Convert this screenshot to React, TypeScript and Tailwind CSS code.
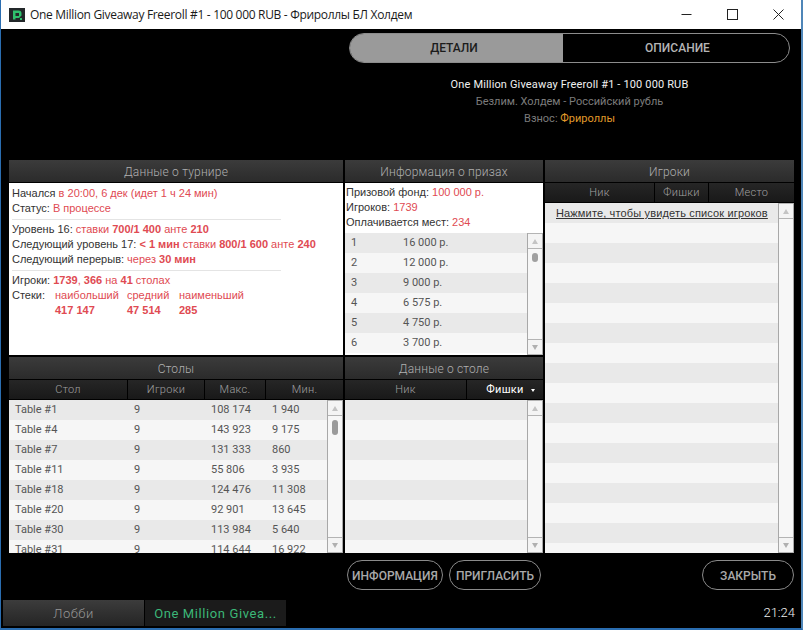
import { FC, ReactNode } from 'react';

const font = "font-['Roboto',sans-serif]";

const PanelTitle: FC<{ children: ReactNode }> = ({ children }) => (
  <div className="h-[22px] shrink-0 flex items-center justify-center pt-px bg-gradient-to-b from-[#3b3b3b] to-[#2b2b2b] text-[12px] font-light tracking-[0.2px] text-[#b0b0b0]">
    {children}
  </div>
);

const ColumnHeader: FC<{ columns: { label: string; width: string; active?: boolean }[] }> = ({ columns }) => (
  <div className="h-[21px] shrink-0 flex bg-black pt-px pb-px gap-px">
    {columns.map((col) => (
      <div
        key={col.label}
        className={`${col.width} relative flex items-center justify-center pt-[2px] bg-gradient-to-b from-[#262626] to-[#191919] text-[11px] tracking-[0.3px] ${col.active ? 'text-white font-normal' : 'text-[#a0a0a0] font-light'}`}
      >
        {col.label}
        {col.active && <span className="absolute right-[8px] top-[9px] border-x-[2px] border-t-[3px] border-x-transparent border-t-white" />}
      </div>
    ))}
  </div>
);

const Scrollbar: FC<{ thumb?: 'round' | 'tall' | 'none' }> = ({ thumb = 'none' }) => (
  <div className="w-[16px] shrink-0 flex flex-col bg-[#f7f7f7] border-x border-[#a8a8a8]">
    <div className="h-[16px] shrink-0 flex items-center justify-center border-b border-t border-[#b4b4b4] bg-[#f4f4f4]">
      <span className="border-x-[3px] border-b-[5px] border-x-transparent border-b-[#c4c4c4]" />
    </div>
    <div className="flex-1 pt-[4px] flex justify-center">
      {thumb === 'round' && <span className="w-[6px] h-[9px] rounded-full bg-[#a0a0a0]" />}
      {thumb === 'tall' && <span className="w-[6px] h-[15px] rounded-full bg-[#9a9a9a]" />}
    </div>
    <div className="h-[16px] shrink-0 flex items-center justify-center border-t border-b border-[#b4b4b4] bg-[#f4f4f4]">
      <span className="border-x-[3px] border-t-[5px] border-x-transparent border-t-[#b0b0b0]" />
    </div>
  </div>
);

const Stripes: FC<{ count: number }> = ({ count }) => (
  <div className="flex-1 overflow-hidden">
    {Array.from({ length: count }).map((_, i) => (
      <div key={i} className={`h-[20px] ${i % 2 === 0 ? 'bg-[#e9e9e9]' : 'bg-[#f6f6f6]'}`} />
    ))}
  </div>
);

const tables = [
  ['Table #1', '9', '108 174', '1 940'],
  ['Table #4', '9', '143 923', '9 175'],
  ['Table #7', '9', '131 333', '860'],
  ['Table #11', '9', '55 806', '3 935'],
  ['Table #18', '9', '124 476', '11 308'],
  ['Table #20', '9', '92 901', '13 645'],
  ['Table #30', '9', '113 984', '5 640'],
  ['Table #31', '9', '114 644', '16 922'],
];

const prizes = [
  ['1', '16 000 р.'],
  ['2', '12 000 р.'],
  ['3', '9 000 р.'],
  ['4', '6 575 р.'],
  ['5', '4 750 р.'],
  ['6', '3 700 р.'],
];

const Red: FC<{ children: ReactNode; bold?: boolean }> = ({ children, bold }) => (
  <span className={`text-[#e04a52] ${bold ? 'font-bold' : ''}`}>{children}</span>
);

const OutlineButton: FC<{ width: string; children: ReactNode }> = ({ width, children }) => (
  <div className={`${width} h-[30px] pt-px rounded-full border border-[#8a8a8a] flex items-center justify-center text-[12px] font-medium text-[#a9a9a9]`}>
    {children}
  </div>
);

export default function App() {
  return (
    <div className={`${font} w-[803px] h-[630px] flex flex-col overflow-hidden bg-black border-l border-l-[#2a6db0] border-r-2 border-r-[#4f86b8] border-b-2 border-b-[#2a6db0]`}>
      <div className="h-[29px] shrink-0 flex items-center bg-white pl-[8px]">
        <svg width="16" height="14" viewBox="0 0 16 14" className="shrink-0 mr-[5px]">
          <rect width="16" height="14" fill="#23282a" />
          <path d="M4 2.5h5.5a3 3 0 0 1 3 3v2L10 10H6.5V8H10V5H6.5v6.5H4z" fill="#2fc26d" />
          <rect x="11" y="10" width="2" height="2" fill="#2fc26d" />
        </svg>
        <span className="font-['Open_Sans',sans-serif] text-[12px] tracking-[-0.31px] text-[#1a1a1a] whitespace-nowrap">
          One Million Giveaway Freeroll #1 - 100 000 RUB - Фрироллы БЛ Холдем
        </span>
        <div className="ml-auto flex items-center mr-[17px] gap-[35px]">
          <svg width="11" height="11" viewBox="0 0 11 11"><path d="M0.5 5.5h10" stroke="#222" fill="none" /></svg>
          <svg width="11" height="11" viewBox="0 0 11 11"><rect x="0.5" y="0.5" width="10" height="10" stroke="#222" fill="none" /></svg>
          <svg width="11" height="11" viewBox="0 0 11 11"><path d="M0.5 0.5l10 10M10.5 0.5l-10 10" stroke="#222" fill="none" /></svg>
        </div>
      </div>

      <div className="h-[131px] shrink-0 flex flex-col items-center pl-[348px] pr-[11px] pt-[4px]">
        <div className="w-[441px] h-[30px] shrink-0 flex rounded-full border border-[#8c8c8c] overflow-hidden text-[12px] font-medium">
          <div className="w-[213px] flex items-center justify-center pr-[5px] bg-[#9a9a9a] text-[#1c1c1c]">ДЕТАЛИ</div>
          <div className="flex-1 flex items-center justify-center pl-[3px] text-[#b5b5b5]">ОПИСАНИЕ</div>
        </div>
        <div className="mt-[14px] text-[11px] leading-[16px] text-center">
          <div className="text-[#f0f0f0] tracking-[0.15px]">One Million Giveaway Freeroll #1 - 100 000 RUB</div>
          <div className="text-[#7c7c7c] mt-px">Безлим. Холдем - Российский рубль</div>
          <div className="text-[#7c7c7c] mt-px">Взнос: <span className="text-[#e09a2a]">Фрироллы</span></div>
        </div>
      </div>

      <div className="ml-[8px] w-[785px] grid grid-cols-[334px_198px_249px] grid-rows-[195px_196px] gap-[2px]">
        <div className="flex flex-col min-h-0">
          <PanelTitle>Данные о турнире</PanelTitle>
          <div className="flex-1 mt-px bg-white pl-[3px] pt-[3px] font-['Liberation_Sans',sans-serif] text-[11px] leading-[15px] text-[#333]">
            <div>Начался <Red>в 20:00, 6 дек (идет 1 ч 24 мин)</Red></div>
            <div>Статус: <Red>В процессе</Red></div>
            <div className="w-[269px] h-px bg-[#e4e4e4] mt-[3px] mb-[2px]" />
            <div>Уровень 16: <Red>ставки <b>700/1 400</b> анте <b>210</b></Red></div>
            <div>Следующий уровень 17: <Red><b>&lt; 1 мин</b> ставки <b>800/1 600</b> анте <b>240</b></Red></div>
            <div>Следующий перерыв: <Red>через <b>30 мин</b></Red></div>
            <div className="w-[269px] h-px bg-[#e4e4e4] mt-[3px] mb-[2px]" />
            <div>Игроки: <Red><b>1739</b>, <b>366</b> на <b>41</b> столах</Red></div>
            <div className="flex">
              <div className="w-[43px]">Стеки:</div>
              <div className="w-[72px]"><Red>наибольший</Red><div><Red bold>417 147</Red></div></div>
              <div className="w-[52px]"><Red>средний</Red><div><Red bold>47 514</Red></div></div>
              <div><Red>наименьший</Red><div><Red bold>285</Red></div></div>
            </div>
          </div>
        </div>

        <div className="flex flex-col min-h-0">
          <PanelTitle>Информация о призах</PanelTitle>
          <div className="flex-1 mt-px bg-white flex flex-col min-h-0">
            <div className="h-[50px] shrink-0 pl-px pt-[2px] font-['Liberation_Sans',sans-serif] text-[11px] leading-[15px] text-[#333]">
              <div>Призовой фонд: <Red>100 000 р.</Red></div>
              <div>Игроков: <Red>1739</Red></div>
              <div>Оплачивается мест: <Red>234</Red></div>
            </div>
            <div className="flex-1 flex min-h-0">
              <div className="flex-1 overflow-hidden">
                {prizes.map((row, i) => (
                  <div key={row[0]} className={`h-[20px] flex items-center pl-[6px] pt-px text-[11px] text-[#555] ${i % 2 === 0 ? 'bg-[#e9e9e9]' : 'bg-[#f6f6f6]'}`}>
                    <span className="w-[52px]">{row[0]}</span>
                    <span>{row[1]}</span>
                  </div>
                ))}
              </div>
              <Scrollbar thumb="round" />
            </div>
          </div>
        </div>

        <div className="row-span-2 flex flex-col min-h-0">
          <PanelTitle>Игроки</PanelTitle>
          <ColumnHeader columns={[
            { label: 'Ник', width: 'w-[109px]' },
            { label: 'Фишки', width: 'w-[53px]' },
            { label: 'Место', width: 'flex-1' },
          ]} />
          <div className="flex-1 flex min-h-0">
            <div className="flex-1 relative overflow-hidden flex flex-col bg-[#f6f6f6]">
              <div className="absolute left-[11px] top-[3px] text-[11px] leading-[15px] tracking-[0.15px] text-[#333] underline whitespace-nowrap font-['Liberation_Sans',sans-serif]">
                Нажмите, чтобы увидеть список игроков
              </div>
              <Stripes count={18} />
            </div>
            <Scrollbar />
          </div>
        </div>

        <div className="flex flex-col min-h-0">
          <PanelTitle>Столы</PanelTitle>
          <ColumnHeader columns={[
            { label: 'Стол', width: 'w-[118px]' },
            { label: 'Игроки', width: 'w-[76px]' },
            { label: 'Макс.', width: 'w-[60px]' },
            { label: 'Мин.', width: 'flex-1' },
          ]} />
          <div className="flex-1 flex min-h-0">
            <div className="flex-1 overflow-hidden">
              {tables.map((row, i) => (
                <div key={row[0]} className={`h-[20px] flex items-center pl-[6px] pt-px text-[11px] text-[#555] ${i % 2 === 0 ? 'bg-[#e9e9e9]' : 'bg-[#f6f6f6]'}`}>
                  <span className="w-[119px]">{row[0]}</span>
                  <span className="w-[77px]">{row[1]}</span>
                  <span className="w-[61px]">{row[2]}</span>
                  <span>{row[3]}</span>
                </div>
              ))}
            </div>
            <Scrollbar thumb="tall" />
          </div>
        </div>

        <div className="flex flex-col min-h-0">
          <PanelTitle>Данные о столе</PanelTitle>
          <ColumnHeader columns={[
            { label: 'Ник', width: 'w-[121px]' },
            { label: 'Фишки', width: 'flex-1', active: true },
          ]} />
          <div className="flex-1 flex min-h-0">
            <Stripes count={8} />
            <Scrollbar />
          </div>
        </div>
      </div>

      <div className="ml-[346px] mr-[7px] mt-[7px] flex">
        <OutlineButton width="w-[96px]">ИНФОРМАЦИЯ</OutlineButton>
        <div className="ml-[6px]"><OutlineButton width="w-[92px]">ПРИГЛАСИТЬ</OutlineButton></div>
        <div className="ml-auto"><OutlineButton width="w-[92px]">ЗАКРЫТЬ</OutlineButton></div>
      </div>

      <div className="mt-[10px] ml-[2px] mr-[6px] flex items-center">
        <div className="w-[141px] h-[26px] flex items-center justify-center pt-px bg-gradient-to-b from-[#3c3c3c] to-[#252525] text-[13px] font-light tracking-[0.5px] text-[#969696]">Лобби</div>
        <div className="w-[141px] h-[26px] ml-px flex items-center justify-center pt-px bg-[#1b1b1b] text-[13px] tracking-[0.6px] text-[#3cb878]">One Million Givea...</div>
        <div className="ml-auto text-[13px] font-light text-[#f0f0f0]">21:24</div>
      </div>
    </div>
  );
}
